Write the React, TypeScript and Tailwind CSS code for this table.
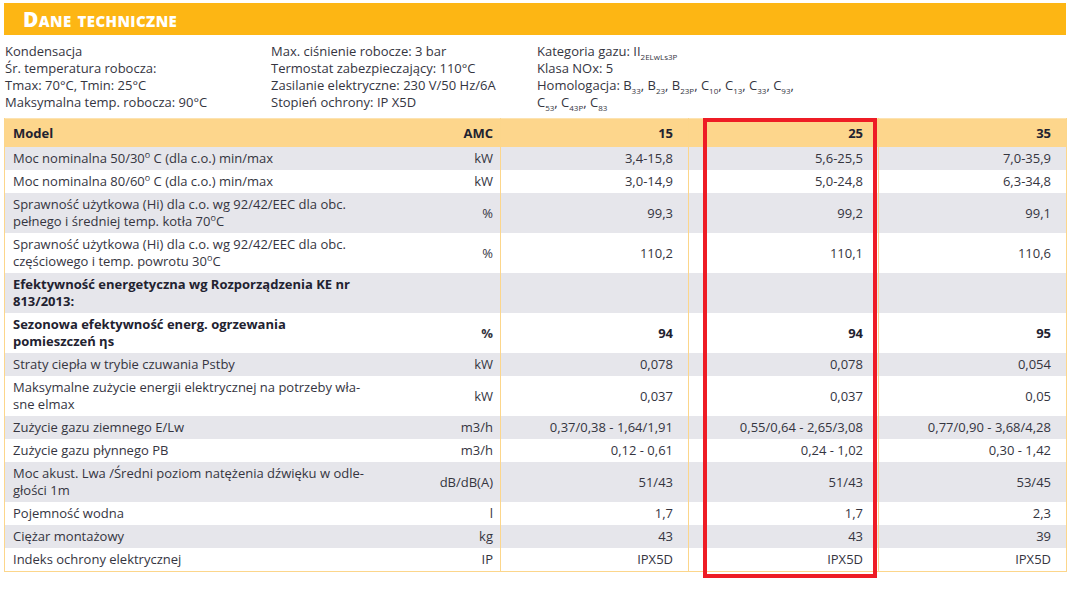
import * as React from "react";

type Row = {
  lines: string[];
  unit: string;
  values: [string, string, string];
  bold?: boolean;
  gray: boolean;
};

const deg = <sup className="text-[9px] -top-[5px]">o</sup>;

const ROWS: Row[] = [
  { lines: ["Moc nominalna 50/30|C (dla c.o.) min/max"], unit: "kW", values: ["3,4-15,8", "5,6-25,5", "7,0-35,9"], gray: true },
  { lines: ["Moc nominalna 80/60|C (dla c.o.) min/max"], unit: "kW", values: ["3,0-14,9", "5,0-24,8", "6,3-34,8"], gray: false },
  {
    lines: ["Sprawność użytkowa (Hi) dla c.o. wg 92/42/EEC dla obc.", "pełnego i średniej temp. kotła 70|C"],
    unit: "%",
    values: ["99,3", "99,2", "99,1"],
    gray: true,
  },
  {
    lines: ["Sprawność użytkowa (Hi) dla c.o. wg 92/42/EEC dla obc.", "częściowego i temp. powrotu 30|C"],
    unit: "%",
    values: ["110,2", "110,1", "110,6"],
    gray: false,
  },
  { lines: ["Efektywność energetyczna wg Rozporządzenia KE nr", "813/2013:"], unit: "", values: ["", "", ""], bold: true, gray: true },
  { lines: ["Sezonowa efektywność energ. ogrzewania", "pomieszczeń ηs"], unit: "%", values: ["94", "94", "95"], bold: true, gray: false },
  { lines: ["Straty ciepła w trybie czuwania Pstby"], unit: "kW", values: ["0,078", "0,078", "0,054"], gray: true },
  {
    lines: ["Maksymalne zużycie energii elektrycznej na potrzeby wła-", "sne elmax"],
    unit: "kW",
    values: ["0,037", "0,037", "0,05"],
    gray: false,
  },
  { lines: ["Zużycie gazu ziemnego E/Lw"], unit: "m3/h", values: ["0,37/0,38 - 1,64/1,91", "0,55/0,64 - 2,65/3,08", "0,77/0,90 - 3,68/4,28"], gray: true },
  { lines: ["Zużycie gazu płynnego PB"], unit: "m3/h", values: ["0,12 - 0,61", "0,24 - 1,02", "0,30 - 1,42"], gray: false },
  {
    lines: ["Moc akust. Lwa /Średni poziom natężenia dźwięku w odle-", "głości 1m"],
    unit: "dB/dB(A)",
    values: ["51/43", "51/43", "53/45"],
    gray: true,
  },
  { lines: ["Pojemność wodna"], unit: "l", values: ["1,7", "1,7", "2,3"], gray: false },
  { lines: ["Ciężar montażowy"], unit: "kg", values: ["43", "43", "39"], gray: true },
  { lines: ["Indeks ochrony elektrycznej"], unit: "IP", values: ["IPX5D", "IPX5D", "IPX5D"], gray: false },
];

// "|" in a label marks a superscript degree sign
function Line({ text }: { text: string }) {
  const parts = text.split("|");
  if (parts.length === 1) return <>{text}</>;
  return (
    <>
      {parts[0]}
      {deg}
      {parts[1].startsWith("C (") ? " " + parts[1] : parts[1]}
    </>
  );
}

function Sub({ children }: { children: React.ReactNode }) {
  return <sub className="text-[8px] -bottom-[4px]">{children}</sub>;
}

export default function App() {
  return (
    <div className="w-[1072px] h-[592px] bg-white pl-[4px] pt-[3px] text-[#35353f] font-['Open_Sans',sans-serif]">
      <div className="flex h-[32px] w-[1062px] items-center bg-[#fdb614] pl-[19px]">
        <h1 className="text-[21px] font-extrabold text-white [font-variant:small-caps] leading-none tracking-[0.4px]">Dane techniczne</h1>
      </div>

      <div className="mt-[8px] grid h-[75px] grid-cols-[266px_266px_1fr] pl-[1px] text-[13px] leading-[17px]">
        <div>
          <p>Kondensacja</p>
          <p>Śr. temperatura robocza:</p>
          <p>Tmax: 70°C, Tmin: 25°C</p>
          <p>Maksymalna temp. robocza: 90°C</p>
        </div>
        <div>
          <p>Max. ciśnienie robocze: 3 bar</p>
          <p>Termostat zabezpieczający: 110°C</p>
          <p>Zasilanie elektryczne: 230 V/50 Hz/6A</p>
          <p>Stopień ochrony: IP X5D</p>
        </div>
        <div>
          <p>
            Kategoria gazu: II<Sub>2ELwLs3P</Sub>
          </p>
          <p>Klasa NOx: 5</p>
          <p>
            Homologacja: B<Sub>33</Sub>, B<Sub>23</Sub>, B<Sub>23P</Sub>, C<Sub>10</Sub>, C<Sub>13</Sub>, C<Sub>33</Sub>, C<Sub>93</Sub>,
          </p>
          <p>
            C<Sub>53</Sub>, C<Sub>43P</Sub>, C<Sub>83</Sub>
          </p>
        </div>
      </div>

      <div className="relative w-[1062px]">
        <table className="w-[1062px] table-fixed border-collapse border-t border-[#fde3b0] text-[13px] leading-[17px]">
          <colgroup>
            <col className="w-[390px]" />
            <col className="w-[106px]" />
            <col className="w-[188px]" />
            <col className="w-[190px]" />
            <col className="w-[188px]" />
          </colgroup>
          <thead>
            <tr className="bg-[#fdd68c] font-bold text-[#222230]">
              <th className="border-l border-[#fcd68b] pt-[6px] pb-[5px] pl-[8px] text-left font-bold">Model</th>
              <th className="pt-[6px] pb-[5px] pr-[7px] text-right font-bold">AMC</th>
              <th className="border-l border-[#fcd68b] pt-[6px] pb-[5px] pr-[15px] text-right font-bold">15</th>
              <th className="border-l border-[#fcd68b] pt-[6px] pb-[5px] pr-[15px] text-right font-bold">25</th>
              <th className="border-x border-[#fcd68b] pt-[6px] pb-[5px] pr-[15px] text-right font-bold">35</th>
            </tr>
          </thead>
          <tbody className="border-b border-[#fcd68b]">
            {ROWS.map((row, i) => (
              <tr key={i} className={row.gray ? "bg-[#e6e6eb]" : "bg-white"}>
                <td className={`border-l border-[#fcd68b] py-[3px] pl-[8px] text-left ${row.bold ? "font-bold text-[#222230]" : ""}`}>
                  {row.lines.map((l, j) => (
                    <React.Fragment key={j}>
                      {j > 0 && <br />}
                      <Line text={l} />
                    </React.Fragment>
                  ))}
                </td>
                <td className={`py-[3px] pr-[7px] text-right ${row.bold ? "font-bold" : ""}`}>{row.unit}</td>
                {row.values.map((v, k) => (
                  <td
                    key={k}
                    className={`py-[3px] pr-[15px] text-right ${k === 2 ? "border-x" : "border-l"} border-[#fcd68b] ${row.bold ? "font-bold text-[#222230]" : ""}`}
                  >
                    {v}
                  </td>
                ))}
              </tr>
            ))}
          </tbody>
        </table>
        <div className="absolute left-[699px] top-0 h-[460px] w-[174px] border-4 border-[#ee1c25]" />
      </div>
    </div>
  );
}
